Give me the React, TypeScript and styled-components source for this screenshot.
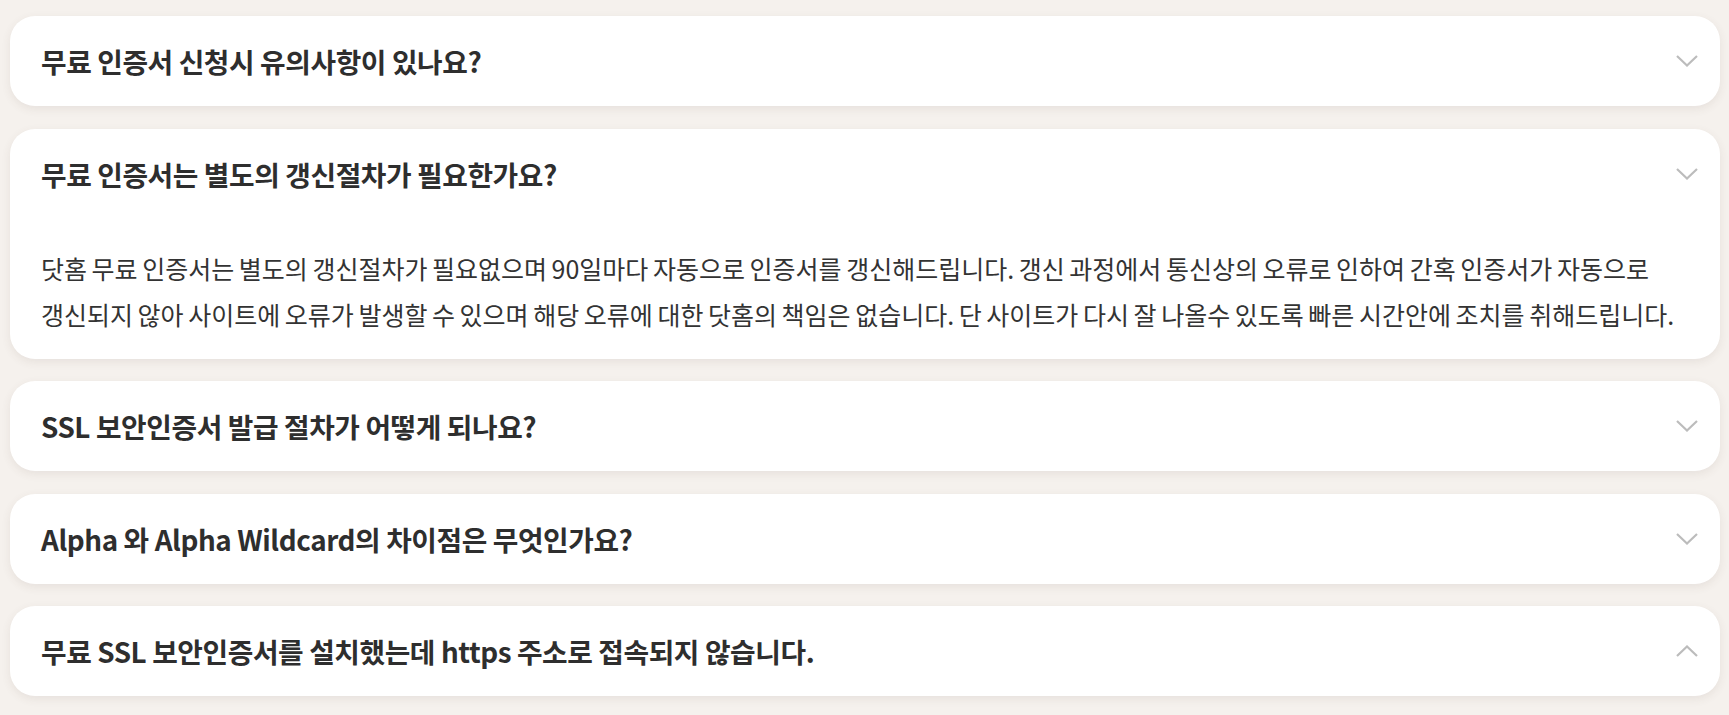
import { useState } from "react";
import styled, { createGlobalStyle } from "styled-components";

const GlobalStyle = createGlobalStyle`
  html, body {
    margin: 0;
    padding: 0;
    background: #f5f1ed;
  }
  body {
    font-family: "Noto Sans CJK KR", "Noto Sans", sans-serif;
    color: #333;
  }
`;

type FaqItem = {
    question: string;
    answer?: string;
    arrow: "up" | "down";
};

const items: FaqItem[] = [
    { question: "무료 인증서 신청시 유의사항이 있나요?", arrow: "down" },
    {
        question: "무료 인증서는 별도의 갱신절차가 필요한가요?",
        answer:
            "닷홈 무료 인증서는 별도의 갱신절차가 필요없으며 90일마다 자동으로 인증서를 갱신해드립니다. 갱신 과정에서 통신상의 오류로 인하여 간혹 인증서가 자동으로 갱신되지 않아 사이트에 오류가 발생할 수 있으며 해당 오류에 대한 닷홈의 책임은 없습니다. 단 사이트가 다시 잘 나올수 있도록 빠른 시간안에 조치를 취해드립니다.",
        arrow: "down",
    },
    { question: "SSL 보안인증서 발급 절차가 어떻게 되나요?", arrow: "down" },
    { question: "Alpha 와 Alpha Wildcard의 차이점은 무엇인가요?", arrow: "down" },
    { question: "무료 SSL 보안인증서를 설치했는데 https 주소로 접속되지 않습니다.", arrow: "up" },
];

const Chevron = function({ dir }: { dir: "up" | "down" }) {
    return (
        <ChevronSvg width="22" height="12" viewBox="0 0 22 12" $dir={dir}>
            <polyline points="1,1 11,10.5 21,1" fill="none" stroke="#bcbcbc" strokeWidth="2.2" />
        </ChevronSvg>
    );
};

const App = function() {
    const [open, setOpen] = useState<number>(1);

    return (
        <>
            <GlobalStyle />
            <FaqList>
                {items.map((item, i) => (
                    <Card key={i}>
                        <Question onClick={() => setOpen(open === i ? -1 : i)}>
                            <QuestionText>{item.question}</QuestionText>
                            <Chevron dir={item.arrow} />
                        </Question>
                        {open === i && item.answer && <Answer>{item.answer}</Answer>}
                    </Card>
                ))}
            </FaqList>
        </>
    );
};

export default App;

const FaqList = styled.div`
    display: flex;
    flex-direction: column;
    gap: 22.5px;
    padding: 16px 9px 19px 10px;
`;

const Card = styled.div`
    background: #fff;
    border-radius: 25px;
    box-shadow: 0 3px 10px rgba(90, 70, 50, 0.09);
    overflow: hidden;
`;

const Question = styled.div`
    height: 90px;
    display: flex;
    align-items: center;
    justify-content: space-between;
    padding: 0 22px 0 31px;
    cursor: pointer;
`;

const QuestionText = styled.h3`
    margin: 0;
    font-size: 27.8px;
    font-weight: 700;
    color: #2e2e2e;
    letter-spacing: -0.4px;
`;

const ChevronSvg = styled.svg<{ $dir: "up" | "down" }>`
    display: block;
    flex-shrink: 0;
    transform: ${(p) => (p.$dir === "up" ? "rotate(180deg)" : "none")};
`;

const Answer = styled.p`
    margin: 0;
    padding: 26px 12px 22px 31px;
    font-size: 25px;
    line-height: 46px;
    font-weight: 400;
    color: #333;
    word-break: keep-all;
    word-spacing: -1px;
`;
